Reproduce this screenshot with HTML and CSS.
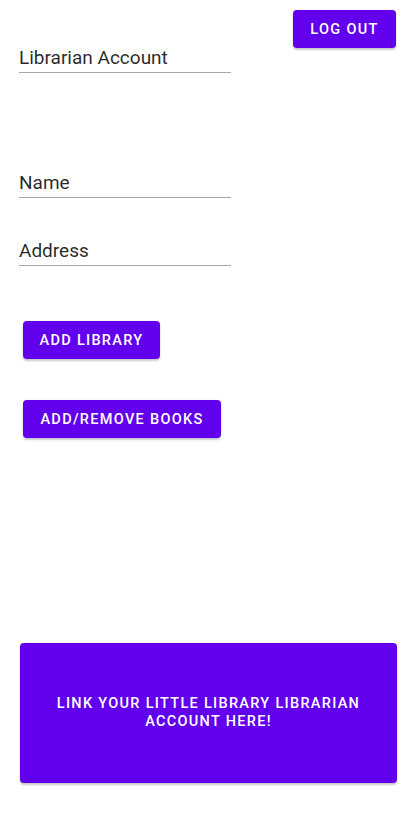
FILE: index.html
```html
<!DOCTYPE html>
<html lang="en">
<head>
<meta charset="utf-8">
<title>Librarian Account</title>
<link rel="stylesheet" href="styles.css">
</head>
<body>
<main class="page">
  <div class="top">
    <div class="field field-title">Librarian Account</div>
    <button class="btn btn-logout">Log out</button>
  </div>
  <div class="field field-name">Name</div>
  <div class="field field-address">Address</div>
  <button class="btn btn-add">Add library</button>
  <button class="btn btn-books">Add/remove books</button>
  <button class="btn btn-link">Link your little library librarian account here!</button>
</main>
</body>
</html>
```
FILE: styles.css
```css
html, body {
  margin: 0;
  padding: 0;
  background: #ffffff;
}
body {
  font-family: Roboto, "Noto Sans", sans-serif;
  width: 405px;
  height: 819px;
  overflow: hidden;
}
.page {
  display: flex;
  flex-direction: column;
  align-items: flex-start;
  padding-left: 19px;
}
.top {
  display: flex;
  justify-content: space-between;
  align-items: flex-start;
  align-self: stretch;
  padding-top: 10px;
  padding-right: 9px;
}
.field {
  width: 212px;
  font-size: 19px;
  line-height: 22px;
  color: rgba(0, 0, 0, 0.85);
  padding-bottom: 3px;
  border-bottom: 1px solid #a6a6a6;
}
.field-title {
  margin-top: 37px;
}
.field-name {
  margin-top: 99px;
}
.field-address {
  margin-top: 42px;
}
.btn {
  font-family: Roboto, "Noto Sans", sans-serif;
  font-size: 14.5px;
  font-weight: 500;
  letter-spacing: 1.3px;
  text-transform: uppercase;
  color: #ffffff;
  background: #6200ee;
  border: none;
  border-radius: 4px;
  height: 38px;
  padding: 1px 12px 0;
  box-shadow: 0 2px 2px rgba(0, 0, 0, 0.2), 0 0 2px rgba(0, 0, 0, 0.1);
}
.btn-logout {
  width: 103px;
}
.btn-add {
  margin-top: 55px;
  margin-left: 4px;
  width: 137px;
}
.btn-books {
  margin-top: 41px;
  margin-left: 4px;
  width: 198px;
}
.btn-link {
  margin-top: 205px;
  margin-left: 1px;
  width: 377px;
  height: 140px;
  line-height: 18px;
  padding: 0 16px;
  text-align: center;
}
```
